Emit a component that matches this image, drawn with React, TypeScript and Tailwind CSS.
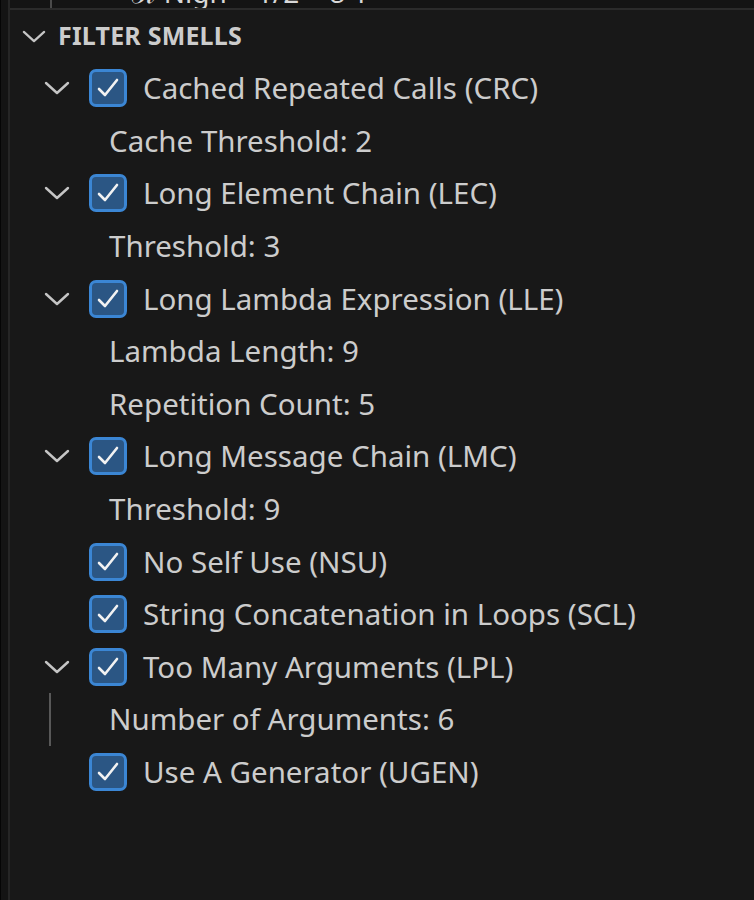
import React from "react";

type Row =
  | { kind: "smell"; label: string; open?: boolean }
  | { kind: "option"; label: string; guide?: boolean };

const rows: Row[] = [
  { kind: "smell", label: "Cached Repeated Calls (CRC)", open: true },
  { kind: "option", label: "Cache Threshold: 2" },
  { kind: "smell", label: "Long Element Chain (LEC)", open: true },
  { kind: "option", label: "Threshold: 3" },
  { kind: "smell", label: "Long Lambda Expression (LLE)", open: true },
  { kind: "option", label: "Lambda Length: 9" },
  { kind: "option", label: "Repetition Count: 5" },
  { kind: "smell", label: "Long Message Chain (LMC)", open: true },
  { kind: "option", label: "Threshold: 9" },
  { kind: "smell", label: "No Self Use (NSU)" },
  { kind: "smell", label: "String Concatenation in Loops (SCL)" },
  { kind: "smell", label: "Too Many Arguments (LPL)", open: true },
  { kind: "option", label: "Number of Arguments: 6", guide: true },
  { kind: "smell", label: "Use A Generator (UGEN)" },
];

function Chevron({ w, h }: { w: number; h: number }) {
  return (
    <svg width={w} height={h} viewBox="0 0 26 14" fill="none">
      <polyline points="2,2 13,12 24,2" stroke="#c5c5c5" strokeWidth="2.4" strokeLinecap="round" strokeLinejoin="round" />
    </svg>
  );
}

function Checkbox() {
  return (
    <div className="w-[38px] h-[38px] shrink-0 rounded-[7px] border-[3px] border-[#3b86d4] bg-[#2b5684] flex items-center justify-center">
      <svg width="26" height="26" viewBox="0 0 26 26" fill="none">
        <polyline points="4,14 10,20 22,5" stroke="#f2f2f2" strokeWidth="2.6" strokeLinecap="round" strokeLinejoin="round" />
      </svg>
    </div>
  );
}

export default function App() {
  return (
    <div
      className="w-[754px] h-[900px] overflow-hidden bg-[#181818] flex text-[#cccccc]"
      style={{ fontFamily: '"Noto Sans", "Open Sans", sans-serif' }}
    >
      {/* activity edge */}
      <div className="w-[8px] shrink-0 bg-[#141414] border-l border-[#050505]" />
      <div className="w-[2px] shrink-0 bg-[#262626]" />

      <div className="flex-1 flex flex-col">
        {/* bottom of the view above, scrolled out of sight */}
        <div className="h-[8px] bg-[#141414] overflow-hidden flex">
          <div className="w-[40px] shrink-0" />
          <div className="w-[2px] shrink-0 bg-[#4a4a4a]" />
          <div className="flex gap-[30px] pl-[80px] text-[28px] leading-[28px] -mt-[22px] text-[#d8d8d8] whitespace-nowrap">
            <span>ℛ Nigh</span>
            <span>1/2</span>
            <span>8 1</span>
          </div>
        </div>
        <div className="h-[2px] bg-[#2b2b2b]" />

        {/* section header */}
        <div className="h-[52px] flex items-center pl-[12px] shrink-0">
          <Chevron w={24} h={13} />
          <span className="ml-[12px] text-[25px] font-bold tracking-[0.2px] text-[#cccccc]">FILTER SMELLS</span>
        </div>

        {rows.map((r, i) =>
          r.kind === "smell" ? (
            <div key={i} className="h-[52.6px] flex items-center shrink-0">
              <div className="w-[34px] shrink-0" />
              <div className="w-[26px] shrink-0 flex items-center justify-center">
                {r.open && <Chevron w={26} h={14} />}
              </div>
              <div className="w-[19px] shrink-0" />
              <Checkbox />
              <span className="ml-[16px] text-[29.5px] whitespace-nowrap">{r.label}</span>
            </div>
          ) : (
            <div key={i} className="h-[52.6px] flex items-center shrink-0">
              <div className="w-[39px] shrink-0" />
              <div className={"w-[2px] self-stretch shrink-0 " + (r.guide ? "bg-[#585858]" : "")} />
              <span className="ml-[58px] text-[29.5px] whitespace-nowrap">{r.label}</span>
            </div>
          )
        )}
      </div>
    </div>
  );
}
